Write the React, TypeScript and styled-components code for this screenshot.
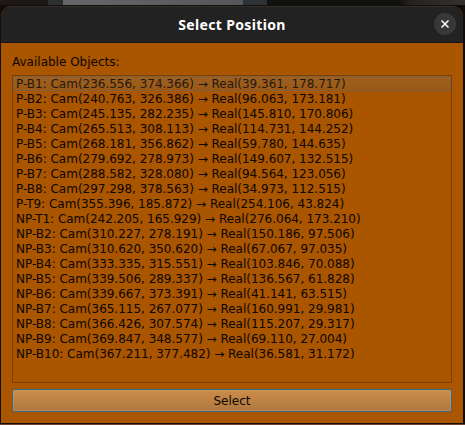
import React from "react";
import styled, { createGlobalStyle } from "styled-components";

const GlobalStyle = createGlobalStyle`
  * { box-sizing: border-box; }
  body { margin: 0; background: #171311; overflow: hidden; }
`;

const Desktop = styled.div`
  width: 465px;
  height: 425px;
  padding: 5px 2px 1px 0;
  background:
    linear-gradient(90deg, #1d1815 0 48px, #2d3031 48px 63px, #66666a 63px, #55575b 243px, #2c3235 243px 267px, #111210 267px 400px, #28221f 410px, #34302d 465px) 0 0 / 465px 5px no-repeat,
    linear-gradient(#6d4431, #6d4431) 0 424px / 465px 1px no-repeat,
    #100c0a;
  font: 12px/15px "DejaVu Sans", sans-serif;
  color: #0c0600;
`;

const Dialog = styled.main`
  display: flex;
  flex-direction: column;
  height: 419px;
  border: 1px solid #160e08;
  border-right: 0;
  border-radius: 12px 12px 0 0;
  background: #aa5500;
  overflow: hidden;
`;

const TitleBar = styled.header`
  display: grid;
  grid-template-columns: 38px 1fr 38px;
  align-items: center;
  height: 37px;
  flex: none;
  background: #222222;
  border-top: 1px solid #303030;
  border-bottom: 1px solid #1b1612;
`;

const Title = styled.h1`
  grid-column: 2;
  margin: 0;
  text-align: center;
  color: #ffffff;
  font: bold 14px/20px "Noto Sans", sans-serif;
  letter-spacing: 0.35px;
`;

const CloseButton = styled.button`
  display: grid;
  place-items: center;
  width: 22px;
  height: 22px;
  margin: -1px 0 0 9px;
  padding: 0;
  border: 0;
  border-radius: 50%;
  background: #383838;
  color: #ffffff;
`;

const Body = styled.section`
  display: flex;
  flex-direction: column;
  flex: 1;
  padding: 12px 11px 11px;
`;

const Label = styled.label`
  height: 20px;
`;

const ObjectList = styled.ul`
  height: 308px;
  margin: 0 0 6px;
  padding: 0;
  border: 1px solid #804000;
  list-style: none;
  letter-spacing: -0.015px;
`;

const ObjectRow = styled.li<{ $current: boolean }>`
  height: 15px;
  padding-left: 2px;
  line-height: ${({ $current }) => ($current ? "15px" : "17px")};
  border: 1px solid ${({ $current }) => ($current ? "#80603b" : "transparent")};
  border-width: ${({ $current }) => ($current ? "1px" : "0 1px")};
  background: ${({ $current }) => ($current ? "linear-gradient(#9c6022, #9c5815)" : "transparent")};
  color: ${({ $current }) => ($current ? "#1f1a10" : "#0c0600")};
  white-space: pre;
`;

const SelectButton = styled.button`
  height: 23px;
  padding: 1px 0 0;
  border: 1px solid #316d8f;
  border-radius: 2px;
  background: linear-gradient(#cc8c49, #ae7840);
  box-shadow: inset 0 0 0 1px #cf985d80;
  color: #0c0600;
  font: inherit;
`;

const objects = [
  ["P-B1", "236.556, 374.366", "39.361, 178.717"],
  ["P-B2", "240.763, 326.386", "96.063, 173.181"],
  ["P-B3", "245.135, 282.235", "145.810, 170.806"],
  ["P-B4", "265.513, 308.113", "114.731, 144.252"],
  ["P-B5", "268.181, 356.862", "59.780, 144.635"],
  ["P-B6", "279.692, 278.973", "149.607, 132.515"],
  ["P-B7", "288.582, 328.080", "94.564, 123.056"],
  ["P-B8", "297.298, 378.563", "34.973, 112.515"],
  ["P-T9", "355.396, 185.872", "254.106, 43.824"],
  ["NP-T1", "242.205, 165.929", "276.064, 173.210"],
  ["NP-B2", "310.227, 278.191", "150.186, 97.506"],
  ["NP-B3", "310.620, 350.620", "67.067, 97.035"],
  ["NP-B4", "333.335, 315.551", "103.846, 70.088"],
  ["NP-B5", "339.506, 289.337", "136.567, 61.828"],
  ["NP-B6", "339.667, 373.391", "41.141, 63.515"],
  ["NP-B7", "365.115, 267.077", "160.991, 29.981"],
  ["NP-B8", "366.426, 307.574", "115.207, 29.317"],
  ["NP-B9", "369.847, 348.577", "69.110, 27.004"],
  ["NP-B10", "367.211, 377.482", "36.581, 31.172"],
];

export default function App() {
  return (
    <Desktop>
      <GlobalStyle />
      <Dialog>
        <TitleBar>
          <Title>Select Position</Title>
          <CloseButton aria-label="Close">
            <svg width="8" height="8" viewBox="0 0 8 8" fill="none" stroke="currentColor" strokeWidth="1.5">
              <path d="M0.5 0.5 7.5 7.5M7.5 0.5 0.5 7.5" />
            </svg>
          </CloseButton>
        </TitleBar>
        <Body>
          <Label>Available Objects:</Label>
          <ObjectList>
            {objects.map(([name, cam, real], index) => (
              <ObjectRow key={name} $current={index === 0}>
                {`${name}: Cam(${cam}) → Real(${real})`}
              </ObjectRow>
            ))}
          </ObjectList>
          <SelectButton>Select</SelectButton>
        </Body>
      </Dialog>
    </Desktop>
  );
}
